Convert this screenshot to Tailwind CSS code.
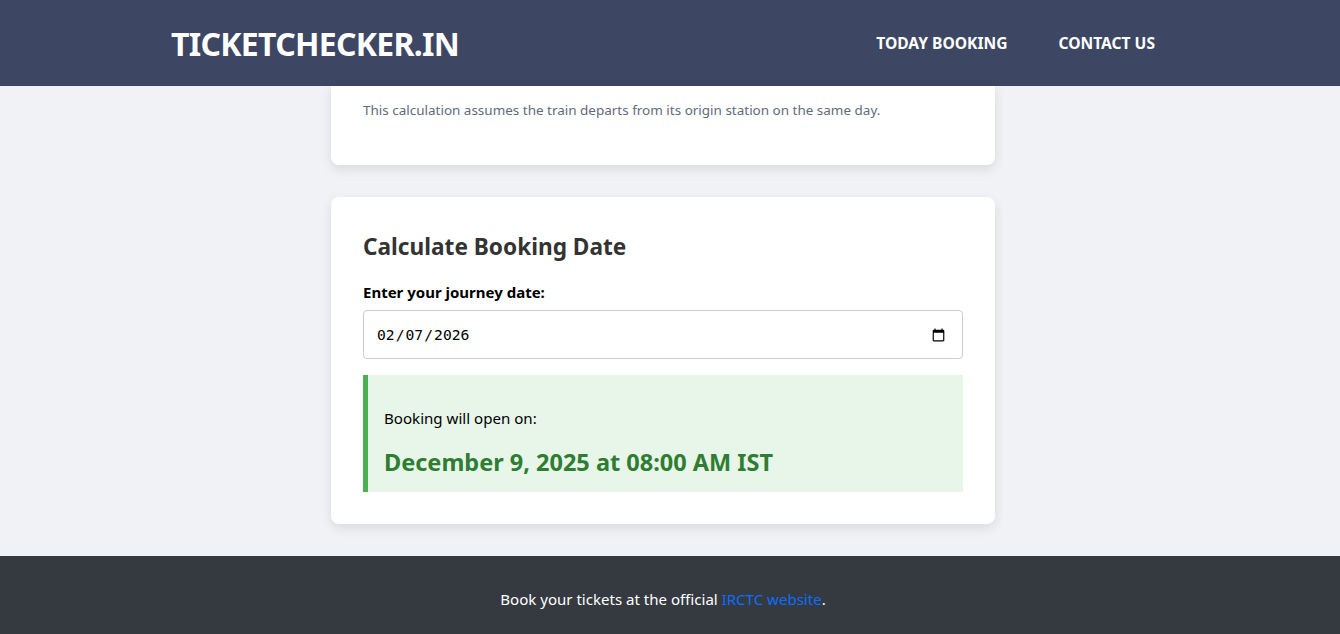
<!DOCTYPE html>
<html lang="en">
<head>
    <meta charset="UTF-8">
    <title>TicketChecker.in</title>
    <script src="https://cdn.jsdelivr.net/npm/@tailwindcss/browser@4"></script>
</head>
<body class="h-[634px] overflow-hidden flex flex-col bg-[#f0f2f5] font-['Noto_Sans',sans-serif]">

    <!-- Header -->
    <header class="h-[86px] shrink-0 bg-[#3d4663] pl-[171px] pr-[185px] flex items-center justify-between text-white">
        <a href="#" class="pt-[2px] text-[32px] font-bold leading-none tracking-[-0.72px]">TICKETCHECKER.IN</a>
        <nav class="flex gap-[51px] pt-[2px] text-[15.6px] font-bold">
            <a href="#">TODAY BOOKING</a>
            <a href="#">CONTACT US</a>
        </nav>
    </header>

    <main class="flex-1 flex flex-col items-center gap-8 pr-[14px]">
        <!-- Previous card, scrolled under the header -->
        <section class="w-[664px] h-[79px] bg-white rounded-b-lg shadow-[0_4px_12px_rgba(0,0,0,0.1)] px-8 pt-[14px]">
            <p class="text-[13.47px] leading-5 text-[#5f6b7a]">This calculation assumes the train departs from its origin station on the same day.</p>
        </section>

        <!-- Calculator card -->
        <section class="w-[664px] h-[327px] bg-white rounded-lg shadow-[0_4px_12px_rgba(0,0,0,0.1)] px-8 pt-[32px]">
            <h2 class="text-[22.65px] font-bold leading-9 text-[#333333]">Calculate Booking Date</h2>
            <label for="journey" class="block mt-[17px] text-[15px] leading-5 font-bold text-black">Enter your journey date:</label>
            <input id="journey" type="date" value="2026-02-07" class="block mt-2 w-full h-[49px] pl-[12px] pr-[14px] pt-[2px] bg-white border border-[#cccccc] rounded font-['DejaVu_Sans_Mono',monospace] text-[14.7px] text-black">
            <div class="mt-4 h-[117px] bg-[#e8f5e9] border-l-[5px] border-[#4caf50] pl-4 pt-[31px]">
                <p class="text-[15.1px] leading-6 text-black">Booking will open on:</p>
                <p class="mt-[16px] text-[23.5px] font-bold leading-8 text-[#2e7d32]">December 9, 2025 at 08:00 AM IST</p>
            </div>
        </section>
    </main>

    <!-- Footer -->
    <footer class="h-[78px] shrink-0 bg-[#343a40] pr-[14px] pt-[8px] flex items-center justify-center text-[15.05px] text-white">
        <p>Book your tickets at the official <a href="#" class="text-[#0d6efd]">IRCTC website</a>.</p>
    </footer>

</body>
</html>
